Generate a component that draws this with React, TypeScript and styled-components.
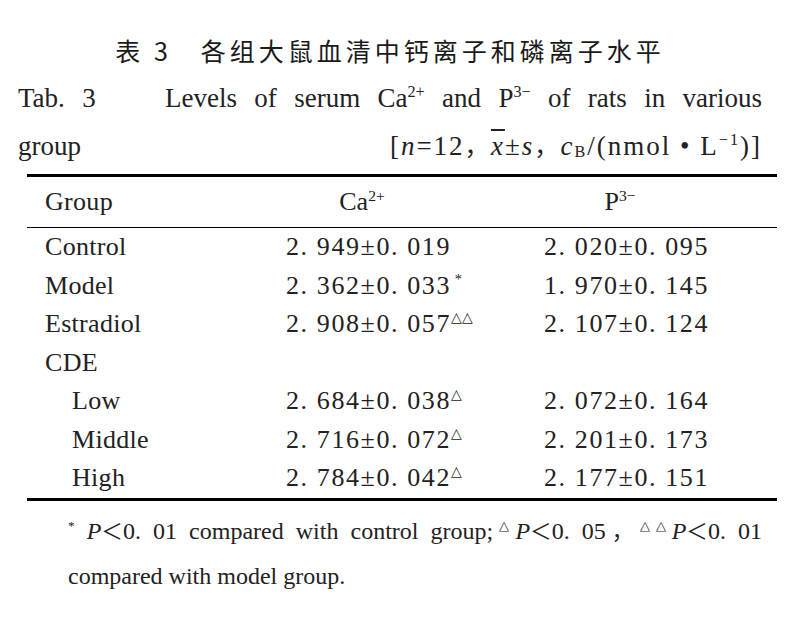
import React from 'react';
import styled, {createGlobalStyle} from 'styled-components';

type Row = {
  group: string,
  ca: string,
  caMark?: string,
  p: string,
  indent?: boolean
}

const SERIF = '"Liberation Serif", "Times New Roman", serif';
const CJK = '"Noto Sans CJK SC", sans-serif';

const rows: Row[] = [
  {group: 'Control', ca: '2. 949±0. 019', p: '2. 020±0. 095'},
  {group: 'Model', ca: '2. 362±0. 033', caMark: ' *', p: '1. 970±0. 145'},
  {group: 'Estradiol', ca: '2. 908±0. 057', caMark: '△△', p: '2. 107±0. 124'},
  {group: 'CDE', ca: '', p: ''},
  {group: 'Low', ca: '2. 684±0. 038', caMark: '△', p: '2. 072±0. 164', indent: true},
  {group: 'Middle', ca: '2. 716±0. 072', caMark: '△', p: '2. 201±0. 173', indent: true},
  {group: 'High', ca: '2. 784±0. 042', caMark: '△', p: '2. 177±0. 151', indent: true},
];

const App: React.FC = () => {
  return (
    <>
      <GlobalStyle />
      <Page lang="en">
        <Caption>
          <Title lang="zh-CN">表 3&nbsp;&nbsp;&nbsp;各组大鼠血清中钙离子和磷离子水平</Title>
          <EnLine>
            Tab. 3&nbsp;&nbsp;&nbsp;&nbsp;Levels of serum Ca<Sup>2+</Sup> and P<Sup>3−</Sup> of rats in various
          </EnLine>
          <EnLine2>
            <span>group</span>
            <Stat>
              [<I>n</I>=12<Cjk>，</Cjk><Bar><I>x</I></Bar>±<I>s</I><Cjk>，</Cjk><I>c</I><Sub>B</Sub>/(nmol • L<Sup>−1</Sup>)]
            </Stat>
          </EnLine2>
        </Caption>

        <Table>
          <HeadRow>
            <Cell>Group</Cell>
            <HeadCell>Ca<Sup>2+</Sup></HeadCell>
            <HeadCell>P<Sup>3−</Sup></HeadCell>
          </HeadRow>
          <div>
            {rows.map((r) => (
              <BodyRow key={r.group}>
                <Cell $indent={r.indent}>{r.group}</Cell>
                <Num>{r.ca}{r.caMark && <Mark>{r.caMark}</Mark>}</Num>
                <Num>{r.p}</Num>
              </BodyRow>
            ))}
          </div>
        </Table>

        <Notes>
          <NoteLine $full>
            <Mark>*</Mark> <I>P</I><Cjk>＜</Cjk>0. 01 compared with control group;<Mark>△</Mark><I>P</I><Cjk>＜</Cjk>0. 05<Cjk>，</Cjk><Mark>△△</Mark><I>P</I><Cjk>＜</Cjk>0. 01
          </NoteLine>
          <NoteLine>compared with model group.</NoteLine>
        </Notes>
      </Page>
    </>
  )
}

export default App;

const GlobalStyle = createGlobalStyle`
  html, body {
    margin: 0;
    background: #fff;
    font-family: ${SERIF};
  }
`;

const Page = styled.div`
  width: 803px;
  height: 623px;
  padding-top: 30px;
  box-sizing: border-box;
  color: #222;

  &&, && * {
    font-family: ${SERIF} !important;
  }
`;

const Caption = styled.div`
  margin-left: 18px;
  width: 744px;
`;

const Title = styled.div`
  &&&& {
    font-family: ${CJK} !important;
  }
  font-size: 25px;
  letter-spacing: 4px;
  line-height: 40px;
  text-align: center;
  color: #1a1a1a;
`;

const Cjk = styled.span`
  &&&& {
    font-family: ${CJK} !important;
  }
  font-size: 0.9em;
`;

const EnLine = styled.div`
  margin-top: 6px;
  font-size: 27px;
  line-height: 44px;
  text-align: justify;
  text-align-last: justify;
`;

const EnLine2 = styled.div`
  display: flex;
  justify-content: space-between;
  align-items: baseline;
  font-size: 27px;
  line-height: 50px;
`;

const Stat = styled.span`
  letter-spacing: 2px;
`;

const I = styled.i`
  font-style: italic;
`;

const Bar = styled.span`
  text-decoration: overline;
`;

const Sup = styled.sup`
  font-size: 0.6em;
  vertical-align: 0.6em;
  line-height: 0;
`;

const Sub = styled.sub`
  font-size: 0.6em;
  vertical-align: -0.1em;
  line-height: 0;
`;

const Table = styled.div`
  margin: 3px 0 0 27px;
  width: 750px;
  border-top: 3px solid #000;
  border-bottom: 3px solid #000;
`;

const HeadRow = styled.div`
  display: grid;
  grid-template-columns: 259px 258px 1fr;
  align-items: center;
  height: 50px;
  border-bottom: 1.5px solid #000;
  font-size: 26px;
`;

const BodyRow = styled.div`
  display: grid;
  grid-template-columns: 259px 258px 1fr;
  align-items: center;
  height: 38.5px;
  font-size: 26px;
`;

const Cell = styled.div<{$indent?: boolean}>`
  padding-left: ${(p) => (p.$indent ? 45 : 18)}px;
  letter-spacing: 0.3px;
`;

const HeadCell = styled.div`
  width: 152px;
  text-align: center;
`;

const Num = styled.div`
  letter-spacing: 1.6px;
  white-space: pre;
`;

const Mark = styled.sup`
  font-size: 0.55em;
  vertical-align: 0.7em;
  line-height: 0;
  letter-spacing: 0;
`;

const Notes = styled.div`
  margin: 6px 0 0 68px;
  width: 694px;
  font-size: 24px;
  line-height: 45px;
`;

const NoteLine = styled.div<{$full?: boolean}>`
  text-align: ${(p) => (p.$full ? 'justify' : 'left')};
  text-align-last: ${(p) => (p.$full ? 'justify' : 'left')};
  white-space: nowrap;
`;
